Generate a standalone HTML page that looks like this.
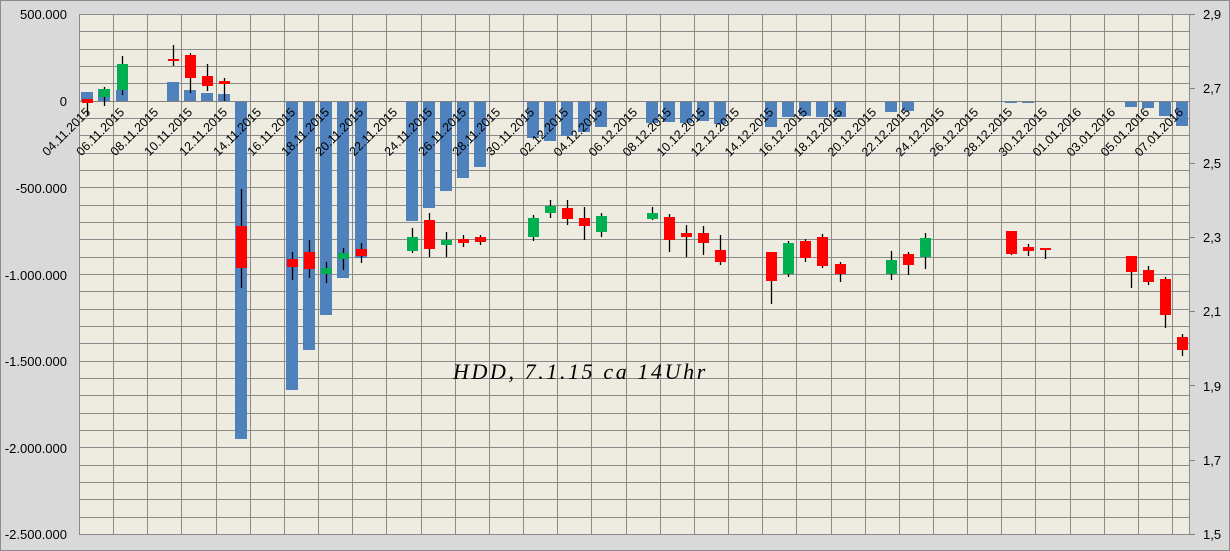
<!DOCTYPE html>
<html><head><meta charset="utf-8"><style>
html,body{margin:0;padding:0;background:#d9d9d9;}
svg{display:block;font-family:"Liberation Sans",sans-serif;}
</style></head><body>
<svg id="c" width="1230" height="551" viewBox="0 0 1230 551" xmlns="http://www.w3.org/2000/svg">
<rect x="0" y="0" width="1230" height="551" fill="#d9d9d9"/>
<rect x="0.5" y="0.5" width="1229" height="550" fill="none" stroke="#8c8c8c"/>
<rect x="79" y="14" width="1110" height="520" fill="#eeece1"/>
<g id="grid" stroke="#8a8a8a" stroke-width="1"></g>
<g id="bars" fill="#4f81bd"></g>
<line x1="79" y1="101.5" x2="1189" y2="101.5" stroke="#808080"/>
<g id="cand"></g>
<g font-size="13" fill="#000" text-anchor="end">
<text x="67" y="19">500.000</text>
<text x="67" y="106">0</text>
<text x="67" y="193">-500.000</text>
<text x="67" y="280">-1.000.000</text>
<text x="67" y="366">-1.500.000</text>
<text x="67" y="453">-2.000.000</text>
<text x="67" y="539">-2.500.000</text>
</g>
<g font-size="13" fill="#000">
<text x="1203" y="19">2,9</text>
<text x="1203" y="93">2,7</text>
<text x="1203" y="168">2,5</text>
<text x="1203" y="242">2,3</text>
<text x="1203" y="316">2,1</text>
<text x="1203" y="391">1,9</text>
<text x="1203" y="465">1,7</text>
<text x="1203" y="539">1,5</text>
</g>
<g stroke="#808080">
<line x1="1189" y1="14.5" x2="1195" y2="14.5"/><line x1="1189" y1="88.5" x2="1195" y2="88.5"/>
<line x1="1189" y1="163.5" x2="1195" y2="163.5"/><line x1="1189" y1="237.5" x2="1195" y2="237.5"/>
<line x1="1189" y1="311.5" x2="1195" y2="311.5"/><line x1="1189" y1="385.5" x2="1195" y2="385.5"/>
<line x1="1189" y1="460.5" x2="1195" y2="460.5"/><line x1="1189" y1="534.5" x2="1195" y2="534.5"/>
</g>
<g font-size="12.5" fill="#000" text-anchor="end">
<text transform="translate(91,113) rotate(-45)">04.11.2015</text>
<text transform="translate(125,113) rotate(-45)">06.11.2015</text>
<text transform="translate(159,113) rotate(-45)">08.11.2015</text>
<text transform="translate(193,113) rotate(-45)">10.11.2015</text>
<text transform="translate(228,113) rotate(-45)">12.11.2015</text>
<text transform="translate(262,113) rotate(-45)">14.11.2015</text>
<text transform="translate(296,113) rotate(-45)">16.11.2015</text>
<text transform="translate(330,113) rotate(-45)">18.11.2015</text>
<text transform="translate(364,113) rotate(-45)">20.11.2015</text>
<text transform="translate(398,113) rotate(-45)">22.11.2015</text>
<text transform="translate(433,113) rotate(-45)">24.11.2015</text>
<text transform="translate(467,113) rotate(-45)">26.11.2015</text>
<text transform="translate(501,113) rotate(-45)">28.11.2015</text>
<text transform="translate(535,113) rotate(-45)">30.11.2015</text>
<text transform="translate(569,113) rotate(-45)">02.12.2015</text>
<text transform="translate(603,113) rotate(-45)">04.12.2015</text>
<text transform="translate(638,113) rotate(-45)">06.12.2015</text>
<text transform="translate(672,113) rotate(-45)">08.12.2015</text>
<text transform="translate(706,113) rotate(-45)">10.12.2015</text>
<text transform="translate(740,113) rotate(-45)">12.12.2015</text>
<text transform="translate(774,113) rotate(-45)">14.12.2015</text>
<text transform="translate(808,113) rotate(-45)">16.12.2015</text>
<text transform="translate(843,113) rotate(-45)">18.12.2015</text>
<text transform="translate(877,113) rotate(-45)">20.12.2015</text>
<text transform="translate(911,113) rotate(-45)">22.12.2015</text>
<text transform="translate(945,113) rotate(-45)">24.12.2015</text>
<text transform="translate(979,113) rotate(-45)">26.12.2015</text>
<text transform="translate(1013,113) rotate(-45)">28.12.2015</text>
<text transform="translate(1048,113) rotate(-45)">30.12.2015</text>
<text transform="translate(1082,113) rotate(-45)">01.01.2016</text>
<text transform="translate(1116,113) rotate(-45)">03.01.2016</text>
<text transform="translate(1150,113) rotate(-45)">05.01.2016</text>
<text transform="translate(1184,113) rotate(-45)">07.01.2016</text>
</g>
<text x="453" y="379" font-family="'Liberation Serif',serif" font-style="italic" font-size="22" letter-spacing="2.6" fill="#000">HDD, 7.1.15 ca 14Uhr</text>
</svg>
<script>
var NS="http://www.w3.org/2000/svg";
function el(p,t,a){var e=document.createElementNS(NS,t);for(var k in a)e.setAttribute(k,a[k]);p.appendChild(e);return e;}
var g=document.getElementById('grid');
for(var i=0;i<=32;i++){var x=Math.round(79+i*34.16)+0.5;if(x>1189)x=1189.5;el(g,'line',{x1:x,y1:14,x2:x,y2:534});}
el(g,'line',{x1:1189.5,y1:14,x2:1189.5,y2:534});
for(var j=0;j<=30;j++){var y=Math.round(14+j*17.333)+0.5;el(g,'line',{x1:79,y1:y,x2:1189,y2:y});}
var bars=[[87,92],[104,89],[122,90],[173,82],[190,90],[207,93],[224,94],[241,439],[292,390],[309,350],[326,315],[343,278],[361,258],[412,221],[429,208],[446,191],[463,178],[480,167],[533,138],[550,141],[567,136],[584,132],[601,127],[652,123],[669,122],[686,123],[703,121],[720,124],[771,127],[788,117],[805,116],[822,117],[840,117],[891,112],[908,111],[1011,103],[1028,103],[1131,107],[1148,108],[1165,116],[1182,126]];
var b=document.getElementById('bars');
bars.forEach(function(d){var y0=101,y1=d[1];el(b,'rect',{x:d[0]-6,y:Math.min(y0,y1),width:12,height:Math.abs(y1-y0)});});
var C=[[87,'r',99,103,99,115],[104,'g',89,97,87,106],[122,'g',64,90,56,95],[173,'r',59,61,45,66],[190,'r',55,78,53,93],[207,'r',76,86,64,91],[224,'r',81,84,78,101],[241,'r',226,268,189,288],[292,'r',259,267,252,280],[309,'r',252,269,240,278],[326,'g',268,274,262,283],[343,'g',253,259,248,270],[361,'r',249,256,243,263],[412,'g',237,251,228,253],[429,'r',220,249,213,257],[446,'g',240,245,232,257],[463,'r',239,243,235,247],[480,'r',237,242,235,245],[533,'g',218,237,215,241],[550,'g',206,213,200,218],[567,'r',208,219,200,225],[584,'r',218,226,207,240],[601,'g',216,232,213,237],[652,'g',213,219,207,220],[669,'r',217,240,214,252],[686,'r',233,237,225,257],[703,'r',233,243,226,255],[720,'r',250,262,235,265],[771,'r',252,281,252,304],[788,'g',243,274,241,277],[805,'r',241,258,239,262],[822,'r',237,266,234,268],[840,'r',264,274,262,282],[891,'g',260,274,251,280],[908,'r',254,265,252,275],[925,'g',238,257,233,269],[1011,'r',231,254,231,255],[1028,'r',247,251,244,256],[1045,'r',248,250,248,259],[1131,'r',256,272,256,288],[1148,'r',270,282,266,285],[1165,'r',279,315,277,328],[1182,'r',337,350,334,356]];
var c=document.getElementById('cand');
C.forEach(function(d){el(c,'line',{x1:d[0]+0.5,y1:d[4],x2:d[0]+0.5,y2:d[5],stroke:'#000','stroke-width':1.3});
el(c,'rect',{x:d[0]-5,y:d[2],width:11,height:Math.max(2,d[3]-d[2]),fill:d[1]=='r'?'#ff0000':'#00b050'});});
</script>
</body></html>
